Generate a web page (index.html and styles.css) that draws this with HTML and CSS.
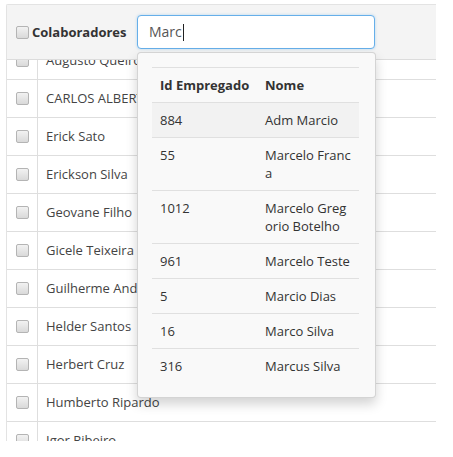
FILE: index.html
```html
<!DOCTYPE html>
<html lang="pt">
<head>
<meta charset="utf-8">
<link rel="stylesheet" href="styles.css">
</head>
<body>
<div class="panel">
  <div class="head">
    <div class="head-check"><span class="cb"></span></div>
    <div class="head-label">Colaboradores</div>
    <div class="search">
      <div class="input">Marc<span class="caret"></span></div>
    </div>
  </div>
  <div class="body">
    <div class="list">
      <div class="row"><div class="c"><span class="cb"></span></div><div class="n">Augusto Queiroz</div></div>
      <div class="row"><div class="c"><span class="cb"></span></div><div class="n">CARLOS ALBERTO</div></div>
      <div class="row"><div class="c"><span class="cb"></span></div><div class="n">Erick Sato</div></div>
      <div class="row"><div class="c"><span class="cb"></span></div><div class="n">Erickson Silva</div></div>
      <div class="row"><div class="c"><span class="cb"></span></div><div class="n">Geovane Filho</div></div>
      <div class="row"><div class="c"><span class="cb"></span></div><div class="n">Gicele Teixeira</div></div>
      <div class="row"><div class="c"><span class="cb"></span></div><div class="n">Guilherme Andrade</div></div>
      <div class="row"><div class="c"><span class="cb"></span></div><div class="n">Helder Santos</div></div>
      <div class="row"><div class="c"><span class="cb"></span></div><div class="n">Herbert Cruz</div></div>
      <div class="row"><div class="c"><span class="cb"></span></div><div class="n">Humberto Ripardo</div></div>
      <div class="row"><div class="c"><span class="cb"></span></div><div class="n">Igor Ribeiro</div></div>
      <div class="row"><div class="c"><span class="cb"></span></div><div class="n">Jorge Lima</div></div>
    </div>
  </div>
  <div class="dropdown">
    <table class="results">
      <colgroup><col class="col-id"><col class="col-nome"></colgroup>
      <thead>
        <tr><th>Id Empregado</th><th>Nome</th></tr>
      </thead>
      <tbody>
        <tr class="active"><td>884</td><td>Adm Marcio</td></tr>
        <tr><td>55</td><td>Marcelo Franca</td></tr>
        <tr><td>1012</td><td>Marcelo Gregorio Botelho</td></tr>
        <tr><td>961</td><td>Marcelo Teste</td></tr>
        <tr><td>5</td><td>Marcio Dias</td></tr>
        <tr><td>16</td><td>Marco Silva</td></tr>
        <tr><td>316</td><td>Marcus Silva</td></tr>
      </tbody>
    </table>
  </div>
</div>
</body>
</html>
```

FILE: styles.css
```css
* { box-sizing: border-box; }
html, body { margin: 0; padding: 0; background: #fff; }
body {
  font-family: "Open Sans", "Noto Sans", sans-serif;
  font-size: 13px;
  line-height: 1.42857;
  color: #444;
}
.panel {
  position: relative;
  margin: 4px 0 0 6px;
  width: 430px;
  height: 437px;
  border-top: 1px solid #e3e3e3;
  border-left: 1px solid #e3e3e3;
  border-top-left-radius: 2px;
}
.head {
  display: flex;
  align-items: center;
  height: 55px;
  padding: 10px 0;
  background: #f4f4f4;
  border-bottom: 1px solid #dcdcdc;
}
.head-check {
  width: 22px;
  padding-left: 9px;
  display: flex;
  align-items: center;
  margin-top: 1px;
}
.head-label {
  font-weight: 700;
  color: #333;
  width: 105px;
  margin-left: 3px;
}
.search { width: 238px; }
.input {
  height: 34px;
  border: 1px solid #66afe9;
  border-radius: 4px;
  background: #fff;
  box-shadow: 0 0 3px rgba(102, 175, 233, 0.45);
  padding: 6px 11px;
  font-size: 14px;
  line-height: 20px;
  color: #555;
  display: flex;
  align-items: center;
}
.caret {
  display: inline-block;
  width: 1px;
  height: 17px;
  background: #222;
  margin-left: 1px;
}
.cb {
  display: inline-block;
  width: 13px;
  height: 13px;
  border: 1px solid #b4b4b4;
  border-radius: 2px;
  background: linear-gradient(#f2f2f2, #d9d9d9);
}
.body {
  height: 381px;
  overflow: hidden;
}
.list {
  width: 429px;
  margin-top: -18px;
}
.row {
  display: flex;
  height: 38px;
  border-bottom: 1px solid #dedede;
}
.row .c {
  width: 31px;
  border-right: 1px solid #dedede;
  display: flex;
  align-items: center;
  justify-content: center;
  padding-left: 1px;
}
.row .n {
  padding-left: 8px;
  display: flex;
  align-items: center;
  color: #444;
}
.dropdown {
  position: absolute;
  left: 130px;
  top: 47px;
  width: 239px;
  height: 346px;
  padding: 14px 15px 14px 14px;
  background: #f9f9f9;
  border: 1px solid rgba(0, 0, 0, 0.15);
  border-radius: 4px;
  box-shadow: 0 6px 12px rgba(0, 0, 0, 0.175);
}
.results {
  width: 207px;
  table-layout: fixed;
  border-collapse: collapse;
  color: #333;
  line-height: 18px;
}
.col-id { width: 105px; }
.col-nome { width: 102px; }
.results th, .results td {
  padding: 8px;
  text-align: left;
  vertical-align: top;
  border-top: 1px solid #e0e0e0;
}
.results td { word-break: break-all; }
.results th { font-weight: 700; white-space: nowrap; }
.results tr.active td { background: #f2f2f2; }
```
